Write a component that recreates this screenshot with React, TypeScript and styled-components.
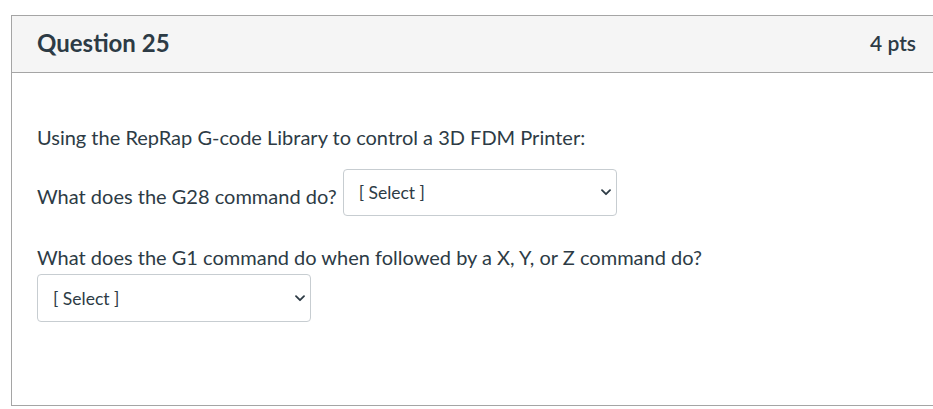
import React from "react";
import styled, { createGlobalStyle } from "styled-components";

const Global = createGlobalStyle`
  html, body { margin: 0; padding: 0; background: #ffffff; overflow: hidden; }
  body { font-family: Lato, "Open Sans", "Liberation Sans", sans-serif; color: #2d3b45; }
`;

const Page = styled.div`
  padding: 15px 0 0 11px;
  width: 960px;
`;

const Card = styled.section`
  width: 931px;
  height: 391px;
  box-sizing: border-box;
  border: 1px solid #a5a5a5;
  display: flex;
  flex-direction: column;
`;

const Header = styled.header`
  height: 57px;
  flex-shrink: 0;
  box-sizing: border-box;
  background: #f5f5f5;
  border-bottom: 1px solid #a5a5a5;
  display: flex;
  align-items: center;
  justify-content: space-between;
  padding: 0 25px 0 25px;
`;

const Title = styled.h2`
  margin: 0 0 3px 0;
  font-size: 24px;
  font-weight: 700;
  color: #2d3b45;
`;

const Points = styled.div`
  margin-bottom: 3px;
  font-size: 21px;
  font-weight: 600;
  color: #2d3b45;
`;

const Body = styled.div`
  padding: 49px 25px 0 25px;
  display: flex;
  flex-direction: column;
`;

const Para = styled.p<{ $gap?: number }>`
  margin: ${(p) => p.$gap ?? 0}px 0 0 0;
  font-size: 20px;
  line-height: 30px;
  color: #2d3b45;
`;

const SelectBox = styled.span<{ $inline?: boolean; $lift?: number; $h?: number }>`
  display: inline-flex;
  align-items: center;
  justify-content: space-between;
  box-sizing: border-box;
  width: 274px;
  height: ${(p) => p.$h ?? 47}px;
  margin-left: ${(p) => (p.$inline ? 6 : 0)}px;
  padding: 0 5px 0 15px;
  border: 1px solid #c7cdd1;
  border-radius: 4px;
  background: #ffffff;
  font-size: 17.5px;
  color: #2d3b45;
  vertical-align: ${(p) => p.$lift ?? 0}px;
`;

const Chevron = () => (
  <svg width="10" height="7" viewBox="0 0 10 7" aria-hidden="true">
    <path d="M1 1.2 L5 5.2 L9 1.2" fill="none" stroke="#2d3b45" strokeWidth="1.8" strokeLinecap="round" strokeLinejoin="round" />
  </svg>
);

const Select = ({ inline, lift, h }: { inline?: boolean; lift?: number; h?: number }) => (
  <SelectBox $inline={inline} $lift={lift} $h={h}>
    <span>[ Select ]</span>
    <Chevron />
  </SelectBox>
);

const Row = styled.div<{ $gap?: number }>`
  margin-top: ${(p) => p.$gap ?? 0}px;
  display: flex;
`;

export default function App() {
  return (
    <>
      <Global />
      <Page>
        <Card>
          <Header>
            <Title>Question 25</Title>
            <Points>4 pts</Points>
          </Header>
          <Body>
            <Para>Using the RepRap G-code Library to control a 3D FDM Printer:</Para>
            <Para $gap={17}>
              What does the G28 command do?
              <Select inline lift={5} />
            </Para>
            <Para $gap={26}>What does the G1 command do when followed by a X, Y, or Z command do?</Para>
            <Row $gap={2}>
              <Select h={48} />
            </Row>
          </Body>
        </Card>
      </Page>
    </>
  );
}
